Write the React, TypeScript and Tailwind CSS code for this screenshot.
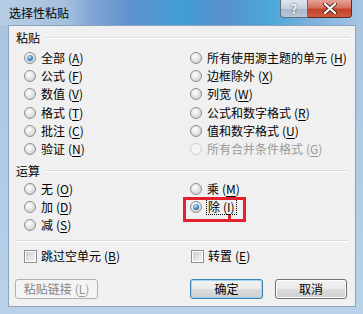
import React from 'react';

const FONT = { fontFamily: '"Noto Sans CJK SC", "Noto Sans", sans-serif' };

const Radio = ({ checked = false, disabled = false }: { checked?: boolean; disabled?: boolean }) => (
    <span
        className={`w-[12px] h-[12px] rounded-full border flex items-center justify-center shrink-0 ${
            disabled
                ? 'border-[#cfcfcf] bg-[#f4f4f4]'
                : 'border-[#8e8f8f] bg-[radial-gradient(circle_at_40%_35%,#ffffff_0%,#e6e6e6_45%,#c6c6c6_100%)]'
        }`}
    >
        {checked && (
            <span className="w-[6px] h-[6px] rounded-full bg-[radial-gradient(circle_at_40%_35%,#b8e4fb_0%,#3b86c4_55%,#174e7e_100%)]" />
        )}
    </span>
);

const Check = () => (
    <span className="w-[13px] h-[13px] border border-[#8e8f8f] bg-white flex items-center justify-center shrink-0">
        <span className="w-[9px] h-[9px] bg-[linear-gradient(135deg,#cbcbcb,#f6f6f6)]" />
    </span>
);

const Key = ({ k, disabled = false }: { k: string; disabled?: boolean }) => (
    <span className={`ml-[3px] ${disabled ? 'text-[#9a9a9a]' : ''}`}>
        (<span className="underline underline-offset-2">{k}</span>)
    </span>
);

interface Opt {
    label: string;
    k: string;
    checked?: boolean;
    disabled?: boolean;
}

const RadioRow = ({ opt, h = 'h-[18.2px]' }: { opt: Opt; h?: string }) => (
    <div className={`flex items-center ${h}`}>
        <Radio checked={opt.checked} disabled={opt.disabled} />
        <span className={`ml-[5px] whitespace-nowrap ${opt.disabled ? 'text-[#9a9a9a]' : 'text-black'}`}>
            {opt.label}
            <Key k={opt.k} disabled={opt.disabled} />
        </span>
    </div>
);

const GroupLabel = ({ text, className = '' }: { text: string; className?: string }) => (
    <div className={`flex items-center h-[16px] pl-[7px] pr-[6px] ${className}`}>
        <span className="text-black">{text}</span>
        <span className="flex-1 ml-[5px] border-t border-[#d5dfe5] border-b border-b-white" />
    </div>
);

const pasteLeft: Opt[] = [
    { label: '全部', k: 'A', checked: true },
    { label: '公式', k: 'F' },
    { label: '数值', k: 'V' },
    { label: '格式', k: 'T' },
    { label: '批注', k: 'C' },
    { label: '验证', k: 'N' },
];

const pasteRight: Opt[] = [
    { label: '所有使用源主题的单元', k: 'H' },
    { label: '边框除外', k: 'X' },
    { label: '列宽', k: 'W' },
    { label: '公式和数字格式', k: 'R' },
    { label: '值和数字格式', k: 'U' },
    { label: '所有合并条件格式', k: 'G', disabled: true },
];

const opLeft: Opt[] = [
    { label: '无', k: 'O' },
    { label: '加', k: 'D' },
    { label: '减', k: 'S' },
];

export default function App() {
    return (
        <div
            className="w-[363px] h-[314px] relative overflow-hidden flex flex-col text-[12px] leading-[16px] bg-[linear-gradient(180deg,#a9c3df,#b9d2ea)]"
            style={FONT}
        >
            {/* title bar */}
            <div className="h-[25px] flex items-center pl-[9px] bg-[linear-gradient(90deg,#b7cde5_0%,#a5c0de_18%,#7ea4d3_26%,#5f91cf_36%,#3f9ed6_50%,#5a8fcd_62%,#4aa8d8_74%,#7eb0dc_86%,#a6c6e4_100%)]">
                <span className="text-black">选择性粘贴</span>
            </div>

            {/* caption buttons */}
            <div className="absolute top-0 left-[280px] flex h-[18px]">
                <div className="w-[28px] h-full rounded-bl-[4px] border border-t-0 border-[#5d6f85] bg-[linear-gradient(180deg,#dfe6ee_0%,#c2cfdc_50%,#a8b8ca_51%,#b9c8d8_100%)] flex items-center justify-center">
                    <span className="text-[13px] leading-none text-[#f4f6f8] font-bold" style={{ textShadow: '0 0 2px #38465a' }}>
                        ?
                    </span>
                </div>
                <div className="w-[44px] h-full rounded-br-[4px] border border-t-0 border-l-0 border-[#5a2a24] bg-[linear-gradient(180deg,#e8a296_0%,#d7715f_45%,#c4422c_55%,#d05b3e_100%)] flex items-center justify-center">
                    <svg width="14" height="11" viewBox="0 0 14 11">
                        <path d="M2 1 L12 10 M12 1 L2 10" stroke="#4a2620" strokeWidth="4" strokeLinecap="round" />
                        <path d="M2 1 L12 10 M12 1 L2 10" stroke="#ffffff" strokeWidth="2.2" strokeLinecap="round" />
                    </svg>
                </div>
            </div>

            {/* client */}
            <div className="ml-[8px] mr-[7px] h-[282px] bg-[#f0f0f0] border border-[#8aa2be] relative flex flex-col pt-[4px]">
                <GroupLabel text="粘贴" />
                <div className="grid grid-cols-[166px_1fr] pl-[15px] mt-[3px]">
                    <div className="flex flex-col">
                        {pasteLeft.map((o) => (
                            <RadioRow key={o.k} opt={o} />
                        ))}
                    </div>
                    <div className="flex flex-col">
                        {pasteRight.map((o) => (
                            <RadioRow key={o.k} opt={o} />
                        ))}
                    </div>
                </div>

                <GroupLabel text="运算" className="mt-[5px]" />
                <div className="grid grid-cols-[166px_1fr] pl-[15px] mt-[1px]">
                    <div className="flex flex-col">
                        {opLeft.map((o) => (
                            <RadioRow key={o.k} opt={o} h="h-[18px]" />
                        ))}
                    </div>
                    <div className="flex flex-col">
                        <RadioRow opt={{ label: '乘', k: 'M' }} h="h-[18px]" />
                        <div className="flex items-center h-[18px]">
                            <Radio checked />
                            <span className="ml-[4px] px-[1px] border border-dotted border-black leading-[14px] whitespace-nowrap">
                                除<Key k="I" />
                            </span>
                        </div>
                    </div>
                </div>

                <div className="mx-[7px] mt-[6px] border-t border-[#d5dfe5] border-b border-b-white" />

                <div className="grid grid-cols-[167px_1fr] pl-[15px] mt-[6px]">
                    <div className="flex items-center h-[16px]">
                        <Check />
                        <span className="ml-[4px] whitespace-nowrap">
                            跳过空单元
                            <Key k="B" />
                        </span>
                    </div>
                    <div className="flex items-center h-[16px]">
                        <Check />
                        <span className="ml-[4px] whitespace-nowrap">
                            转置
                            <Key k="E" />
                        </span>
                    </div>
                </div>

                <div className="flex items-center mt-[15px] pl-[6px]">
                    <button className="w-[83px] h-[20px] rounded-[3px] border border-[#adb2b5] bg-[#f4f4f4] text-[#838383] flex items-center justify-center">
                        粘贴链接
                        <Key k="L" disabled />
                    </button>
                    <button className="ml-[92px] w-[73px] h-[20px] rounded-[3px] border border-[#3c7fb1] bg-[linear-gradient(180deg,#f2f2f2_0%,#ebebeb_48%,#dddddd_50%,#cfcfcf_100%)] shadow-[inset_0_0_0_1px_#9fd4f2] text-black flex items-center justify-center">
                        确定
                    </button>
                    <button className="ml-[12px] w-[72px] h-[20px] rounded-[3px] border border-[#707070] bg-[linear-gradient(180deg,#f2f2f2_0%,#ebebeb_48%,#dddddd_50%,#cfcfcf_100%)] shadow-[inset_0_0_0_1px_#fcfcfc] text-black flex items-center justify-center">
                        取消
                    </button>
                </div>

                {/* red annotation */}
                <div className="absolute left-[174px] top-[171px] w-[63px] h-[25px] border-[3px] border-[#e3202b]" />
                <div className="absolute left-[219px] top-[189px] w-[3px] h-[6px] bg-[#e3202b]" />
            </div>
        </div>
    );
}
